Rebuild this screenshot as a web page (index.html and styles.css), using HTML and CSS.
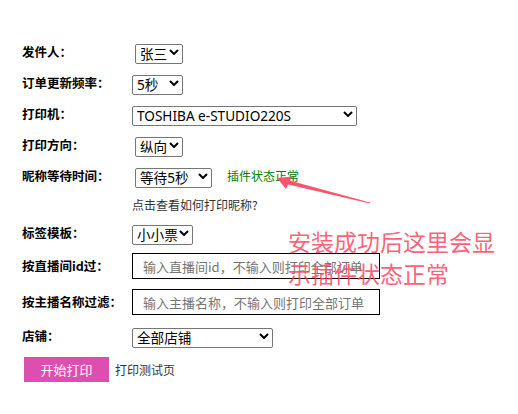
FILE: index.html
```html
<!DOCTYPE html>
<html lang="zh-CN">
<head>
<meta charset="utf-8">
<title>打印设置</title>
<link rel="stylesheet" href="styles.css">
</head>
<body>
<div class="form">
  <div class="row">
    <span class="lbl">发件人：</span>
    <span class="sel w48 ml3"><select><option>张三</option></select><svg class="chev" width="10" height="6" viewBox="0 0 10 6"><path d="M1 1 L5 5 L9 1" fill="none" stroke="#000" stroke-width="2"/></svg></span>
  </div>
  <div class="row">
    <span class="lbl">订单更新频率：</span>
    <span class="sel w51"><select><option>5秒</option></select><svg class="chev" width="10" height="6" viewBox="0 0 10 6"><path d="M1 1 L5 5 L9 1" fill="none" stroke="#000" stroke-width="2"/></svg></span>
  </div>
  <div class="row">
    <span class="lbl">打印机：</span>
    <span class="sel w225"><select><option>TOSHIBA e-STUDIO220S</option></select><svg class="chev" width="10" height="6" viewBox="0 0 10 6"><path d="M1 1 L5 5 L9 1" fill="none" stroke="#000" stroke-width="2"/></svg></span>
  </div>
  <div class="row">
    <span class="lbl">打印方向：</span>
    <span class="sel w48 ml3"><select><option>纵向</option></select><svg class="chev" width="10" height="6" viewBox="0 0 10 6"><path d="M1 1 L5 5 L9 1" fill="none" stroke="#000" stroke-width="2"/></svg></span>
  </div>
  <div class="row">
    <span class="lbl">昵称等待时间：</span>
    <span class="sel w77 ml3"><select><option>等待5秒</option></select><svg class="chev" width="10" height="6" viewBox="0 0 10 6"><path d="M1 1 L5 5 L9 1" fill="none" stroke="#000" stroke-width="2"/></svg></span>
    <span class="status">插件状态正常</span>
  </div>
  <div class="row row-link">
    <a class="help">点击查看如何打印昵称?</a>
  </div>
  <div class="row">
    <span class="lbl">标签模板：</span>
    <span class="sel w61"><select><option>小小票</option></select><svg class="chev" width="10" height="6" viewBox="0 0 10 6"><path d="M1 1 L5 5 L9 1" fill="none" stroke="#000" stroke-width="2"/></svg></span>
  </div>
  <div class="row row-tall">
    <span class="lbl">按直播间id过：</span>
    <input class="txt" type="text" placeholder="输入直播间id，不输入则打印全部订单">
  </div>
  <div class="row row-tall">
    <span class="lbl">按主播名称过滤：</span>
    <input class="txt" type="text" placeholder="输入主播名称，不输入则打印全部订单">
  </div>
  <div class="row">
    <span class="lbl">店铺：</span>
    <span class="sel w141"><select><option>全部店铺</option></select><svg class="chev" width="10" height="6" viewBox="0 0 10 6"><path d="M1 1 L5 5 L9 1" fill="none" stroke="#000" stroke-width="2"/></svg></span>
  </div>
  <div class="actions">
    <button class="btn">开始打印</button>
    <a class="test">打印测试页</a>
  </div>
</div>

<svg class="arrow" width="518" height="414" viewBox="0 0 518 414">
  <polygon points="277,178 293,176.5 289.5,180.5 370,202.6 370,203.4 288,184.5 286,189" fill="#f8566f"/>
</svg>
<div class="note">安装成功后这里会显<br>示插件状态正常</div>
</body>
</html>
```

FILE: styles.css
```css
html, body {
  margin: 0;
  padding: 0;
  background: #fff;
}
body {
  font-family: "Noto Sans", "Noto Sans CJK SC", sans-serif;
  color: #000;
  position: relative;
  width: 518px;
  height: 414px;
  overflow: hidden;
}
.form {
  padding: 36px 0 0 22px;
  display: flex;
  flex-direction: column;
}
.row {
  display: flex;
  align-items: center;
  height: 31px;
}
.row-link {
  height: 26px;
  padding-left: 110px;
}
.row-tall {
  height: 36px;
}
.lbl {
  width: 110px;
  flex: none;
  font-size: 12.5px;
  font-weight: 700;
  line-height: 18px;
  font-family: "Noto Sans CJK SC", sans-serif;
}
.sel {
  position: relative;
  display: inline-block;
  height: 20px;
}
.sel select {
  appearance: none;
  -webkit-appearance: none;
  width: 100%;
  height: 20px;
  margin: 0;
  border: 1px solid #767676;
  border-radius: 2px;
  background: #fff;
  padding: 0 0 0 4px;
  font-family: "Noto Sans", "Noto Sans CJK SC", sans-serif;
  font-size: 13.6px;
  line-height: 18px;
  color: #000;
  box-sizing: border-box;
}
.sel .chev {
  position: absolute;
  right: 4px;
  top: 7px;
  pointer-events: none;
}
.ml3 { margin-left: 3px; }
.w48 { width: 48px; }
.w51 { width: 51px; }
.w61 { width: 61px; }
.w77 { width: 77px; }
.w141 { width: 141px; }
.w225 { width: 225px; }
.status {
  margin-left: 15px;
  color: #008000;
  font-size: 12px;
  font-family: "Noto Sans CJK SC", sans-serif;
}
.help {
  color: #333;
  font-size: 12px;
  font-family: "Noto Sans CJK SC", sans-serif;
}
.txt {
  width: 248px;
  height: 26px;
  margin: 0;
  box-sizing: border-box;
  border: 1px solid #000;
  border-radius: 0;
  padding: 0 0 0 10px;
  font-size: 13px;
  font-family: "Noto Sans CJK SC", sans-serif;
  outline: none;
}
.txt::placeholder {
  color: #757575;
}
.actions {
  display: flex;
  align-items: center;
  margin-top: 6px;
  margin-left: 2px;
}
.btn {
  width: 85px;
  height: 25px;
  border: none;
  background: #dd4fae;
  color: #fff;
  font-size: 13px;
  font-family: "Noto Sans CJK SC", sans-serif;
  padding: 0;
  margin: 0;
}
.test {
  margin-left: 6px;
  color: #333;
  font-size: 12px;
  font-family: "Noto Sans CJK SC", sans-serif;
}
.arrow {
  position: absolute;
  left: 0;
  top: 0;
  pointer-events: none;
}
.note {
  position: absolute;
  left: 288px;
  top: 225px;
  font-family: "Noto Sans CJK SC", sans-serif;
  font-size: 23px;
  line-height: 32px;
  color: rgba(255, 70, 95, 0.85);
  white-space: nowrap;
  pointer-events: none;
}
```
